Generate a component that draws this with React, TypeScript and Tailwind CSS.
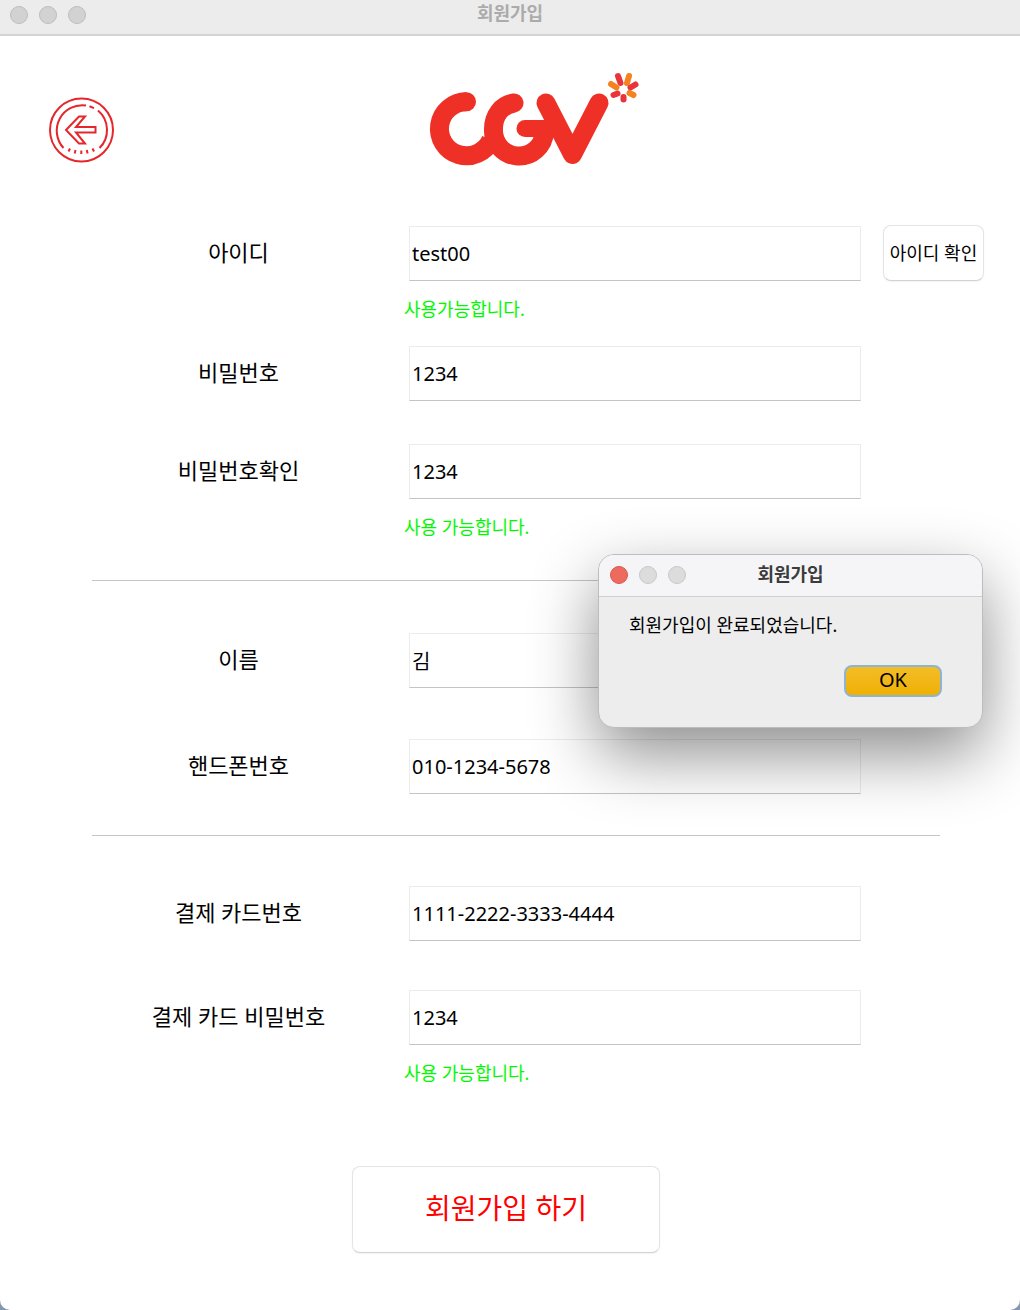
import { useState } from "react";

function TrafficLights({ active = false }: { active?: boolean }) {
  const idle = active ? "bg-[#dcdcdd] border-[#c8c8c9]" : "bg-[#d2d2d3] border-[#bdbdbe]";
  return (
    <div className="flex gap-[11px]">
      <button
        type="button"
        aria-label="닫기"
        className={`size-[18px] rounded-full border ${active ? "bg-[#ed6a5e] border-[#d9584d]" : idle}`}
      />
      <button type="button" aria-label="최소화" className={`size-[18px] rounded-full border ${idle}`} />
      <button type="button" aria-label="확대" className={`size-[18px] rounded-full border ${idle}`} />
    </div>
  );
}

function BackIcon() {
  return (
    <svg viewBox="0 0 66 66" className="size-[66px]" fill="none" stroke="#e5272b" strokeWidth="2">
      <circle cx="33.5" cy="33" r="31.5" />
      <path d="M15.5 51A25.500 25.500 0 0 1 38 8.500M50 13.500A25.500 25.500 0 0 1 51.500 51" />
      <path d="M41.500 9.300l4.500 1.800" />
      <path d="M18 33L31 19.500H37L28 30H47.500V35.500H28L37 46.500H31Z" />
      <path d="M22 51.500l-1.500 3M27.500 53l-.8 3.400M33.300 53.500v3.500M38.800 53l.8 3.400M44.500 51.500l1.500 3" />
    </svg>
  );
}

function CgvLogo() {
  return (
    <svg viewBox="0 0 230 115" className="h-[115px] w-[230px]" fill="none" strokeLinecap="round" role="img" aria-label="CGV">
      <g stroke="#ef3026" strokeWidth="19" strokeLinejoin="round">
        <path d="M46.500 41.800A27 27 0 1 0 71 80" strokeLinecap="butt" />
        <path d="M45.500 41.800H46.500" />
        <path d="M94 43C81 45 73.500 56 73.500 69A25.500 25.500 0 0 0 124.500 72" />
        <path d="M105 68.500H126" strokeWidth="17" />
        <path d="M126 43L152.500 94.500L179 43" />
      </g>
      <path d="M112.500 77L115 78Q113 82 109 84L120 84V76Z" fill="#ef3026" />
      <g strokeWidth="6">
        <path d="M198 16L200.500 23" stroke="#e8343a" />
        <path d="M209 16L207 23" stroke="#f58220" />
        <path d="M215.500 24.500L210.500 27.500" stroke="#e8343a" />
        <path d="M213.500 35L209.500 33" stroke="#f58220" />
        <path d="M203.500 39.500V37" stroke="#e8343a" />
        <path d="M193.500 35L197.500 33.500" stroke="#e8343a" />
        <path d="M191 24L196.500 27.500" stroke="#f58220" />
      </g>
    </svg>
  );
}

type FieldProps = {
  id: string;
  label: string;
  value: string;
  status?: string;
  action?: string;
};

function Field({ id, label, value, status, action }: FieldProps) {
  const [text, setText] = useState(value);
  return (
    <div className="grid grid-cols-[minmax(0,341fr)_minmax(0,452fr)_123px] pr-9 pl-[68px]">
      <label htmlFor={id} className="self-center pb-1 text-center text-[22px] leading-8">
        {label}
      </label>
      <input
        id={id}
        value={text}
        onChange={(e) => setText(e.target.value)}
        className="h-[55px] w-full border border-[#ececec] border-b-[#c4c4c4] bg-transparent px-0.5 text-xl outline-none"
      />
      {action && (
        <button
          type="button"
          className="-mt-px ml-[22px] rounded-lg border border-[#e4e4e4] border-b-[#d2d2d2] bg-white text-lg whitespace-nowrap shadow-xs"
        >
          {action}
        </button>
      )}
      {status && (
        <p className="col-start-2 mt-4 -ml-[5px] text-lg leading-6 text-[#00f900]">{status}</p>
      )}
    </div>
  );
}

function Divider() {
  return <hr className="mr-20 ml-[92px] border-[#c6c6c6]" />;
}

function Dialog() {
  return (
    <section
      role="dialog"
      aria-labelledby="dialog-title"
      className="absolute top-[554px] right-[37px] w-[385px] overflow-hidden rounded-2xl border border-[#bdbdbd] bg-[#ededed] shadow-[0_26px_66px_rgba(0,0,0,0.45)]"
    >
      <header className="relative flex h-[42px] items-center border-b border-[#cfcfcf] bg-[#f5f5f8] pb-0.5 pl-[11px]">
        <TrafficLights active />
        <h2
          id="dialog-title"
          className="pointer-events-none absolute inset-x-0 top-[7px] text-center text-lg leading-6 font-bold text-[#3c3c3c]"
        >
          회원가입
        </h2>
      </header>
      <p className="mt-4 ml-[30px] text-lg leading-6">회원가입이 완료되었습니다.</p>
      <div className="mt-7 mr-10 mb-[30px] flex justify-end">
        <button
          type="button"
          className="h-8 w-[98px] rounded-lg border-2 border-[#8db4d3] bg-linear-to-b from-[#f3bd25] to-[#f0b000] pb-0.5 text-xl leading-6"
        >
          OK
        </button>
      </div>
    </section>
  );
}

export default function App() {
  return (
    <div className="bg-[#8397b0]">
      <div className="relative min-h-screen overflow-hidden rounded-b-[10px] bg-white pb-[57px] font-['Noto_Sans','Noto_Sans_CJK_KR',sans-serif] text-black">
        <header className="relative flex h-9 items-center border-b-2 border-[#d4d4d4] bg-[#ececed] pb-1 pl-2.5">
          <TrafficLights />
          <h1 className="pointer-events-none absolute inset-x-0 top-px text-center text-lg leading-6 font-bold text-[#ababab]">
            회원가입
          </h1>
        </header>

        <div className="grid h-[190px] grid-cols-[1fr_auto_1fr] items-start px-12 pt-6">
          <button type="button" aria-label="뒤로" className="mt-[37px] size-[66px]">
            <BackIcon />
          </button>
          <div className="ml-[50px]">
            <CgvLogo />
          </div>
        </div>

        <form onSubmit={(e) => e.preventDefault()}>
          <Field id="user-id" label="아이디" value="test00" status="사용가능합니다." action="아이디 확인" />
          <div className="h-[25px]" />
          <Field id="password" label="비밀번호" value="1234" />
          <div className="h-[43px]" />
          <Field id="password-check" label="비밀번호확인" value="1234" status="사용 가능합니다." />
          <div className="h-[41px]" />
          <Divider />
          <div className="h-[52px]" />
          <Field id="name" label="이름" value="김" />
          <div className="h-[51px]" />
          <Field id="phone" label="핸드폰번호" value="010-1234-5678" />
          <div className="h-[41px]" />
          <Divider />
          <div className="h-[50px]" />
          <Field id="card" label="결제 카드번호" value="1111-2222-3333-4444" />
          <div className="h-[49px]" />
          <Field id="card-password" label="결제 카드 비밀번호" value="1234" status="사용 가능합니다." />
          <div className="mt-[81px] flex justify-center pr-2">
            <button
              type="submit"
              className="h-[87px] w-[308px] rounded-lg border border-[#e4e4e4] border-b-[#d2d2d2] bg-white pb-1 text-[28px] text-[#ff0000] shadow-xs"
            >
              회원가입 하기
            </button>
          </div>
        </form>

        <Dialog />
      </div>
    </div>
  );
}
